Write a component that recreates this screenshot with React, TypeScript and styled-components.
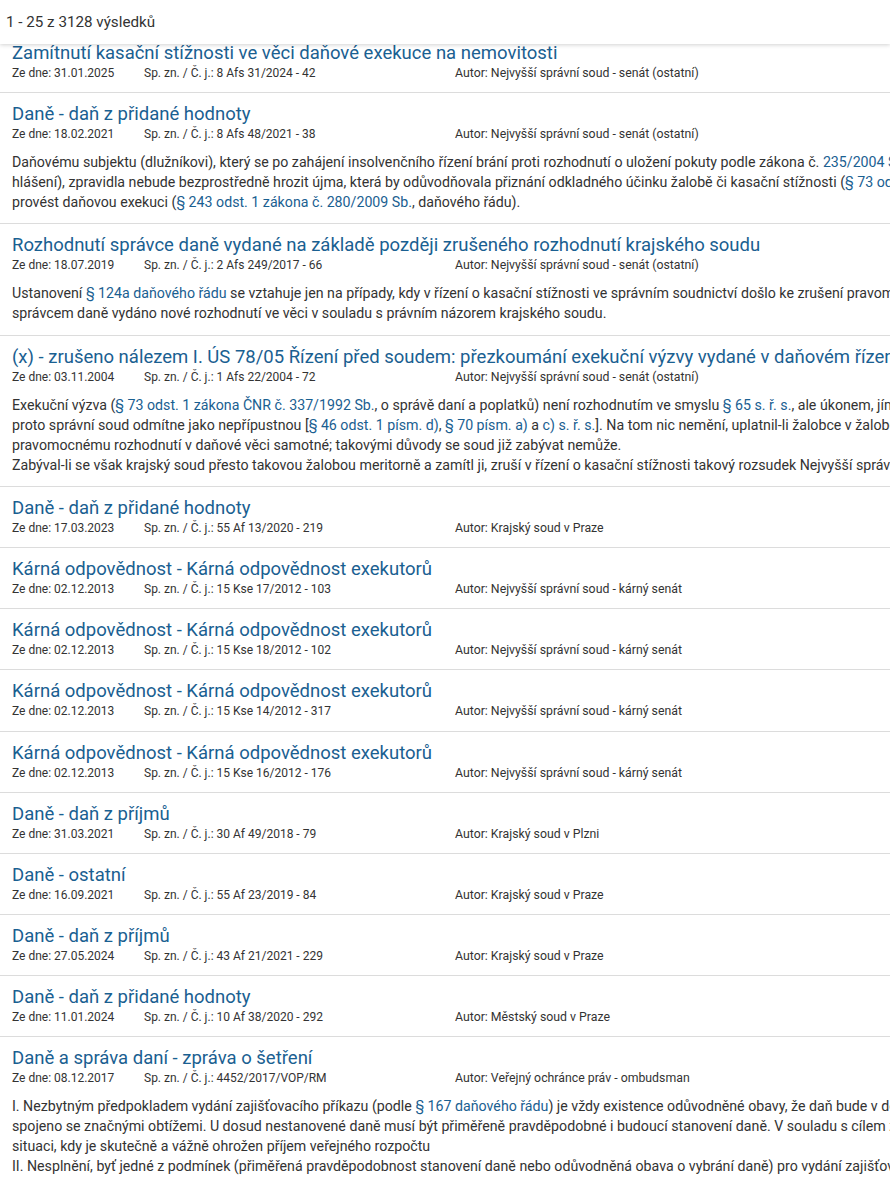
import React from 'react';
import styled, { createGlobalStyle } from 'styled-components';

const GlobalStyle = createGlobalStyle`
  html, body {
    margin: 0;
    padding: 0;
    background: #fff;
    overflow-x: hidden;
  }
  body {
    font-family: Roboto, "Noto Sans", sans-serif;
    color: #333;
  }
`;

type Part = string | { link: string };

interface Result {
  title: string;
  date: string;
  ref: string;
  author: string;
  body?: Part[][];
}

const NSS = 'Nejvyšší správní soud - senát (ostatní)';
const KARNY = 'Nejvyšší správní soud - kárný senát';
const KARNA = 'Kárná odpovědnost - Kárná odpovědnost exekutorů';

const results: Result[] = [
  {
    title: 'Zamítnutí kasační stížnosti ve věci daňové exekuce na nemovitosti',
    date: '31.01.2025',
    ref: '8 Afs 31/2024 - 42',
    author: NSS,
  },
  {
    title: 'Daně - daň z přidané hodnoty',
    date: '18.02.2021',
    ref: '8 Afs 48/2021 - 38',
    author: NSS,
    body: [
      [
        'Daňovému subjektu (dlužníkovi), který se po zahájení insolvenčního řízení brání proti rozhodnutí o uložení pokuty podle zákona č. ',
        { link: '235/2004 Sb.' },
        ', o dani z přidané hodnoty (za nepodání kontrolního',
      ],
      [
        'hlášení), zpravidla nebude bezprostředně hrozit újma, která by odůvodňovala přiznání odkladného účinku žalobě či kasační stížnosti (',
        { link: '§ 73 odst. 2 s. ř. s.' },
        '), neboť správce daně nemůže',
      ],
      [
        'provést daňovou exekuci (',
        { link: '§ 243 odst. 1 zákona č. 280/2009 Sb.' },
        ', daňového řádu).',
      ],
    ],
  },
  {
    title: 'Rozhodnutí správce daně vydané na základě později zrušeného rozhodnutí krajského soudu',
    date: '18.07.2019',
    ref: '2 Afs 249/2017 - 66',
    author: NSS,
    body: [
      [
        'Ustanovení ',
        { link: '§ 124a daňového řádu' },
        ' se vztahuje jen na případy, kdy v řízení o kasační stížnosti ve správním soudnictví došlo ke zrušení pravomocného rozsudku krajského soudu, na jehož základě bylo',
      ],
      ['správcem daně vydáno nové rozhodnutí ve věci v souladu s právním názorem krajského soudu.'],
    ],
  },
  {
    title: '(x) - zrušeno nálezem I. ÚS 78/05 Řízení před soudem: přezkoumání exekuční výzvy vydané v daňovém řízení',
    date: '03.11.2004',
    ref: '1 Afs 22/2004 - 72',
    author: NSS,
    body: [
      [
        'Exekuční výzva (',
        { link: '§ 73 odst. 1 zákona ČNR č. 337/1992 Sb.' },
        ', o správě daní a poplatků) není rozhodnutím ve smyslu ',
        { link: '§ 65 s. ř. s.' },
        ', ale úkonem, jímž se zahajuje daňová exekuce; žalobu proti ní',
      ],
      [
        'proto správní soud odmítne jako nepřípustnou [',
        { link: '§ 46 odst. 1 písm. d)' },
        ', ',
        { link: '§ 70 písm. a)' },
        ' a ',
        { link: 'c) s. ř. s.' },
        ']. Na tom nic nemění, uplatnil-li žalobce v žalobě i námitky směřující k',
      ],
      ['pravomocnému rozhodnutí v daňové věci samotné; takovými důvody se soud již zabývat nemůže.'],
      [
        'Zabýval-li se však krajský soud přesto takovou žalobou meritorně a zamítl ji, zruší v řízení o kasační stížnosti takový rozsudek Nejvyšší správní soud a žalobu odmítne.',
      ],
    ],
  },
  {
    title: 'Daně - daň z přidané hodnoty',
    date: '17.03.2023',
    ref: '55 Af 13/2020 - 219',
    author: 'Krajský soud v Praze',
  },
  { title: KARNA, date: '02.12.2013', ref: '15 Kse 17/2012 - 103', author: KARNY },
  { title: KARNA, date: '02.12.2013', ref: '15 Kse 18/2012 - 102', author: KARNY },
  { title: KARNA, date: '02.12.2013', ref: '15 Kse 14/2012 - 317', author: KARNY },
  { title: KARNA, date: '02.12.2013', ref: '15 Kse 16/2012 - 176', author: KARNY },
  {
    title: 'Daně - daň z příjmů',
    date: '31.03.2021',
    ref: '30 Af 49/2018 - 79',
    author: 'Krajský soud v Plzni',
  },
  {
    title: 'Daně - ostatní',
    date: '16.09.2021',
    ref: '55 Af 23/2019 - 84',
    author: 'Krajský soud v Praze',
  },
  {
    title: 'Daně - daň z příjmů',
    date: '27.05.2024',
    ref: '43 Af 21/2021 - 229',
    author: 'Krajský soud v Praze',
  },
  {
    title: 'Daně - daň z přidané hodnoty',
    date: '11.01.2024',
    ref: '10 Af 38/2020 - 292',
    author: 'Městský soud v Praze',
  },
  {
    title: 'Daně a správa daní - zpráva o šetření',
    date: '08.12.2017',
    ref: '4452/2017/VOP/RM',
    author: 'Veřejný ochránce práv - ombudsman',
    body: [
      [
        'I. Nezbytným předpokladem vydání zajišťovacího příkazu (podle ',
        { link: '§ 167 daňového řádu' },
        ') je vždy existence odůvodněné obavy, že daň bude v době své splatnosti nedobytná nebo její vybrání bude',
      ],
      [
        'spojeno se značnými obtížemi. U dosud nestanovené daně musí být přiměřeně pravděpodobné i budoucí stanovení daně. V souladu s cílem zajišťovacího příkazu jde o',
      ],
      ['situaci, kdy je skutečně a vážně ohrožen příjem veřejného rozpočtu'],
      [
        'II. Nesplnění, byť jedné z podmínek (přiměřená pravděpodobnost stanovení daně nebo odůvodněná obava o vybrání daně) pro vydání zajišťovacího příkazu',
      ],
    ],
  },
];

const Page = styled.div`
  width: 100%;
`;

const Header = styled.div`
  position: relative;
  z-index: 1;
  height: 44px;
  padding: 0 6px;
  display: flex;
  align-items: center;
  background: #fff;
  font-size: 15.2px;
  color: #333;
  box-shadow: 0 1px 4px rgba(0, 0, 0, 0.18);
`;

const List = styled.ul`
  list-style: none;
  margin: -12px 0 0;
  padding: 0;
`;

const Item = styled.li`
  padding: 9px 12px 11.2px;
  border-bottom: 1px solid #dcdcdc;
  white-space: nowrap;
`;

const Title = styled.a`
  display: block;
  font-size: 18.5px;
  line-height: 24px;
  color: #1a6091;
  text-decoration: none;
`;

const Meta = styled.div`
  display: grid;
  grid-template-columns: 132px 311px auto;
  font-size: 12px;
  line-height: 16px;
  color: #333;
`;

const Author = styled.span`
  font-size: 12.3px;
`;

const Body = styled.div`
  margin-top: 10px;
  font-size: 14.2px;
  line-height: 20px;
  color: #333;
`;

const Line = styled.div``;

const Ref = styled.a`
  color: #1a6091;
  text-decoration: none;
`;

const App: React.FC = () => {
  return (
    <Page>
      <GlobalStyle />
      <Header>1 - 25 z 3128 výsledků</Header>
      <List>
        {results.map((r, i) => (
          <Item key={i}>
            <Title href="#">{r.title}</Title>
            <Meta>
              <span>Ze dne: {r.date}</span>
              <span>Sp. zn. / Č. j.: {r.ref}</span>
              <Author>Autor: {r.author}</Author>
            </Meta>
            {r.body && (
              <Body>
                {r.body.map((line, j) => (
                  <Line key={j}>
                    {line.map((p, k) =>
                      typeof p === 'string' ? (
                        <React.Fragment key={k}>{p}</React.Fragment>
                      ) : (
                        <Ref key={k} href="#">
                          {p.link}
                        </Ref>
                      )
                    )}
                  </Line>
                ))}
              </Body>
            )}
          </Item>
        ))}
      </List>
    </Page>
  );
};

export default App;
